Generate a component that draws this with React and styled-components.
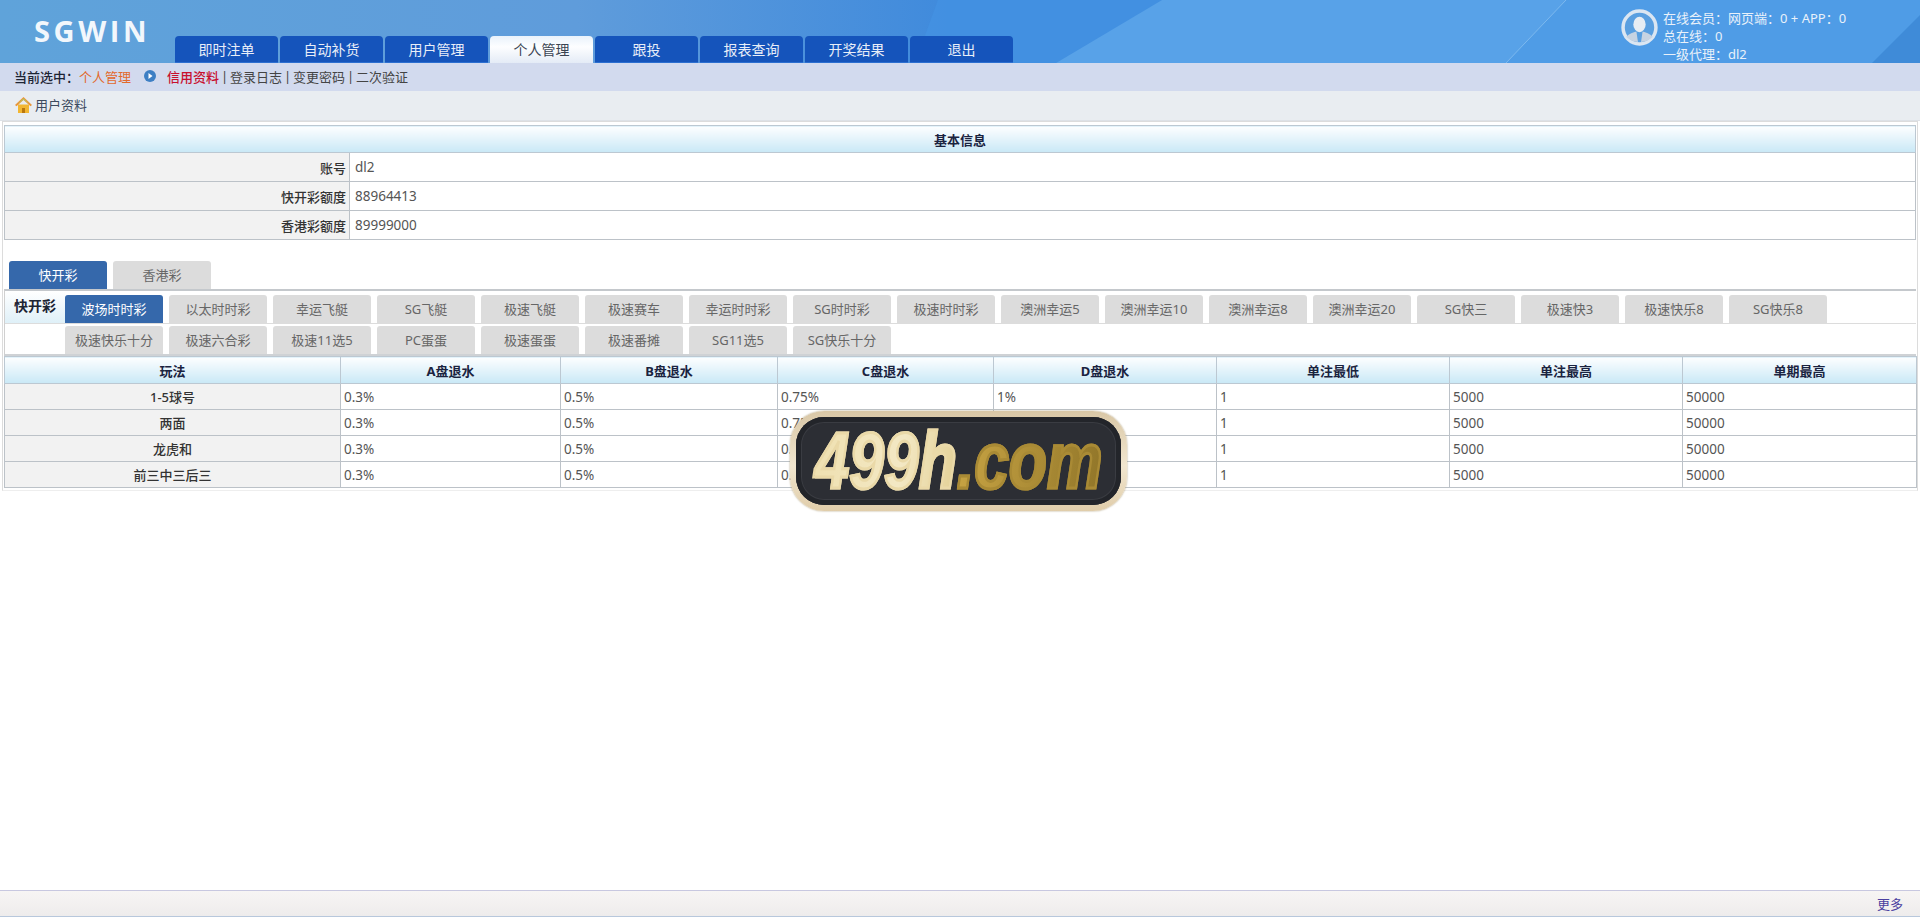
import React from "react";
import styled, { createGlobalStyle } from "styled-components";

const navItems = ["即时注单", "自动补货", "用户管理", "个人管理", "跟投", "报表查询", "开奖结果", "退出"];

const games = [
  "波场时时彩", "以太时时彩", "幸运飞艇", "SG飞艇", "极速飞艇", "极速赛车", "幸运时时彩", "SG时时彩", "极速时时彩",
  "澳洲幸运5", "澳洲幸运10", "澳洲幸运8", "澳洲幸运20", "SG快三", "极速快3", "极速快乐8", "SG快乐8",
];
const games2 = ["极速快乐十分", "极速六合彩", "极速11选5", "PC蛋蛋", "极速蛋蛋", "极速番摊", "SG11选5", "SG快乐十分"];

const columns = [
  { name: "玩法", width: 336 },
  { name: "A盘退水", width: 220 },
  { name: "B盘退水", width: 217 },
  { name: "C盘退水", width: 216 },
  { name: "D盘退水", width: 223 },
  { name: "单注最低", width: 233 },
  { name: "单注最高", width: 233 },
  { name: "单期最高", width: 234 },
];

const rows = ["1-5球号", "两面", "龙虎和", "前三中三后三"];

const links = ["登录日志", "变更密码", "二次验证"];

export default function App() {
  return (
    <Page>
      <GlobalStyle />
      <Header>
        <HeaderArt viewBox="0 0 1920 63" preserveAspectRatio="none">
          <defs>
            <linearGradient id="sky" x1="0" x2="1" y1="0" y2="0">
              <stop offset="0" stopColor="#5fa3da" />
              <stop offset="0.3" stopColor="#5f9cdb" />
              <stop offset="0.5" stopColor="#3f8adc" />
              <stop offset="1" stopColor="#3f8fe0" />
            </linearGradient>
          </defs>
          <rect width="1920" height="63" fill="url(#sky)" />
          <polygon points="938,0 1162,0 1056,63 915,63" fill="#4595e4" opacity="0.6" />
          <polygon points="1162,0 1920,0 1920,63 1056,63" fill="#58a2e8" />
          <polygon points="1566,0 1920,0 1920,63 1506,63" fill="#4f9ce6" />
          <polygon points="1920,15 1920,63 1872,63" fill="#3f8bd8" />
          <line x1="1506" y1="63" x2="1566" y2="0" stroke="#7db9ee" strokeWidth="1" />
        </HeaderArt>
        <Logo>SGWIN</Logo>
        <Nav>
          {navItems.map((item) => (
            <NavTab key={item} $active={item === "个人管理"}>
              {item}
            </NavTab>
          ))}
        </Nav>
        <UserBox>
          <Avatar viewBox="0 0 36 36">
            <circle cx="18" cy="18" r="16" fill="#5a9fe0" stroke="#dbe6f2" strokeWidth="3.4" />
            <ellipse cx="18" cy="15" rx="6" ry="7.5" fill="#e8edf3" />
            <path d="M5 27c3-3 7-4 10-5l1.5 10C12 32 8 30 5 27zM31 27c-3-3-7-4-10-5l-1.5 10c4.500 0 8.500-2 11.500-5z" fill="#c7d3e2" />
          </Avatar>
          <UserText>
            <div>在线会员：网页端：0 + APP：0</div>
            <div>总在线：0</div>
            <div>一级代理：dl2</div>
          </UserText>
        </UserBox>
      </Header>

      <SubNav>
        <strong>当前选中：</strong>
        <Current>个人管理</Current>
        <Bullet viewBox="0 0 12 12">
          <circle cx="6" cy="6" r="6" fill="#3d7fc4" />
          <path d="M4.500 3l4 3-4 3z" fill="#fff" />
        </Bullet>
        <ActiveLink>信用资料</ActiveLink>
        {links.map((link) => (
          <React.Fragment key={link}>
            <Sep>|</Sep>
            <SubLink>{link}</SubLink>
          </React.Fragment>
        ))}
      </SubNav>

      <Crumb>
        <svg width="17" height="16" viewBox="0 0 17 16">
          <path d="M3 7.500h11V16H3z" fill="#f2b632" />
          <path d="M7 11h3v5H7z" fill="#b9770e" />
          <path d="M8.500 0L0 8l1.500 1.300 7-6.300 7 6.300L17 8z" fill="#e9963a" />
          <path d="M8.500 1.500L2.500 7l6-4.300L14.500 7z" fill="#a9cf6a" />
        </svg>
        用户资料
      </Crumb>

      <Content>
        <DataTable>
          <colgroup>
            <col width="345" />
            <col />
          </colgroup>
          <thead>
            <tr>
              <HeadCell colSpan={2}>基本信息</HeadCell>
            </tr>
          </thead>
          <tbody>
            <InfoRow label="账号" value="dl2" />
            <InfoRow label="快开彩额度" value="88964413" />
            <InfoRow label="香港彩额度" value="89999000" />
          </tbody>
        </DataTable>

        <MainTabs>
          <MainTab $active>快开彩</MainTab>
          <MainTab>香港彩</MainTab>
        </MainTabs>

        <GameBox>
          <GameRow $line>
            <GameLabel>快开彩</GameLabel>
            <GameList>
              {games.map((g, i) => (
                <GameTab key={g} $active={i === 0}>{g}</GameTab>
              ))}
            </GameList>
          </GameRow>
          <GameRow>
            <GameLabel $blank />
            <GameList>
              {games2.map((g) => (
                <GameTab key={g}>{g}</GameTab>
              ))}
            </GameList>
          </GameRow>
        </GameBox>

        <DataTable>
          <colgroup>
            {columns.map((c) => (
              <col key={c.name} width={c.width} />
            ))}
          </colgroup>
          <thead>
            <tr>
              {columns.map((c) => (
                <HeadCell key={c.name}>{c.name}</HeadCell>
              ))}
            </tr>
          </thead>
          <tbody>
            {rows.map((r) => (
              <tr key={r}>
                <LabelCell $h={26}>{r}</LabelCell>
                <ValueCell>0.3%</ValueCell>
                <ValueCell>0.5%</ValueCell>
                <ValueCell>0.75%</ValueCell>
                <ValueCell>1%</ValueCell>
                <ValueCell>1</ValueCell>
                <ValueCell>5000</ValueCell>
                <ValueCell>50000</ValueCell>
              </tr>
            ))}
          </tbody>
        </DataTable>
      </Content>

      <Footer>更多</Footer>

      <Badge>
        <BadgeInner>
          <BadgeText>
            <Pale>499h</Pale>
            <Gold>.com</Gold>
          </BadgeText>
        </BadgeInner>
      </Badge>
    </Page>
  );
}

function InfoRow({ label, value }) {
  return (
    <tr>
      <LabelCell $right $h={29}>{label}</LabelCell>
      <ValueCell $wide>{value}</ValueCell>
    </tr>
  );
}

const GlobalStyle = createGlobalStyle`
  html, body {
    margin: 0;
    padding: 0;
    background: #fff;
    overflow: hidden;
  }
  body {
    font-family: "Noto Sans", "Noto Sans CJK SC", sans-serif;
    font-size: 13px;
    color: #333;
  }
`;

const Page = styled.div`
  position: relative;
  display: flex;
  flex-direction: column;
  height: 919px;
`;

const Header = styled.header`
  position: relative;
  display: flex;
  height: 63px;
  flex-shrink: 0;
`;

const HeaderArt = styled.svg`
  position: absolute;
  inset: 0;
  width: 100%;
  height: 100%;
`;

const Logo = styled.div`
  position: relative;
  width: 175px;
  padding: 13px 0 0 34px;
  box-sizing: border-box;
  font-family: "Open Sans", sans-serif;
  font-size: 29px;
  font-weight: 700;
  line-height: 36px;
  letter-spacing: 3.6px;
  color: #f2f7fc;
`;

const Nav = styled.nav`
  position: relative;
  display: flex;
  align-items: flex-end;
  gap: 2px;
`;

const NavTab = styled.div`
  width: 103px;
  height: 27px;
  box-sizing: border-box;
  border-radius: 4px 4px 0 0;
  text-align: center;
  font-size: 14px;
  line-height: 28px;
  background: ${(p) => (p.$active ? "linear-gradient(#e9f2fb, #fdfeff 40%, #e4ebf6)" : "#1554bb")};
  color: ${(p) => (p.$active ? "#3a4452" : "#e8eef8")};
  border-bottom: ${(p) => (p.$active ? "none" : "1px solid #2c6fd0")};
`;

const UserBox = styled.div`
  position: relative;
  display: flex;
  margin-left: auto;
  width: 299px;
`;

const Avatar = styled.svg`
  width: 37px;
  height: 37px;
  margin: 9px 5px 0 0;
`;

const UserText = styled.div`
  padding-top: 9px;
  font-size: 13px;
  line-height: 18px;
  color: #e9f1fa;
`;

const SubNav = styled.div`
  display: flex;
  align-items: center;
  height: 28px;
  flex-shrink: 0;
  box-sizing: border-box;
  padding: 0 0 2px 14px;
  background: #d2daee;

  strong {
    color: #1d2433;
    font-weight: 500;
  }
`;

const Current = styled.span`
  color: #e2692c;
`;

const Bullet = styled.svg`
  width: 12px;
  height: 12px;
  margin: 0 11px 0 13px;
`;

const ActiveLink = styled.span`
  color: #c8102e;
  font-weight: 500;
`;

const SubLink = styled.span`
  color: #444;
`;

const Sep = styled.span`
  width: 11px;
  text-align: center;
  color: #444;
`;

const Crumb = styled.div`
  display: flex;
  align-items: center;
  gap: 3px;
  height: 30px;
  flex-shrink: 0;
  box-sizing: border-box;
  padding: 0 0 2px 15px;
  background: #e9edf1;
  border-bottom: 1px solid #dde1e6;
  color: #3c4a5e;
`;

const Content = styled.main`
  margin: 0 2px;
  padding: 3px 1px 2px;
  border: 1px solid #dcdcdc;
  border-bottom-color: #eee;
`;

const DataTable = styled.table`
  width: 1912px;
  table-layout: fixed;
  border-collapse: collapse;
  border: 1px solid #bcc2c8;
`;

const HeadCell = styled.th`
  height: 27px;
  box-sizing: border-box;
  padding: 0;
  border: 1px solid #bcc8d2;
  background: linear-gradient(#fdfeff, #c9e8f6);
  color: #1a2340;
  font-weight: 700;
  font-size: 13px;
`;

const LabelCell = styled.td`
  height: ${(p) => p.$h}px;
  box-sizing: border-box;
  padding: 0 ${(p) => (p.$right ? "3px" : "0")} 0 0;
  border: 1px solid #bcc2c8;
  background: #f2f2f2;
  color: #333;
  font-weight: 500;
  text-align: ${(p) => (p.$right ? "right" : "center")};
`;

const ValueCell = styled.td`
  padding: 0 0 0 ${(p) => (p.$wide ? "5px" : "3px")};
  border: 1px solid #bcc2c8;
  font-size: 13.5px;
  color: #555;
`;

const MainTabs = styled.div`
  display: flex;
  gap: 6px;
  margin: 21px 0 0 5px;
`;

const MainTab = styled.div`
  width: 98px;
  height: 28px;
  border-radius: 3px 3px 0 0;
  text-align: center;
  line-height: 28px;
  background: ${(p) => (p.$active ? "#3568ab" : "#dcdcdc")};
  color: ${(p) => (p.$active ? "#fff" : "#666")};
`;

const GameBox = styled.div`
  border-top: 2px solid #c4c8cc;
  border-bottom: 2px solid #cfd2d5;
  border-left: 1px solid #d0d0d0;
`;

const GameRow = styled.div`
  display: flex;
  height: ${(p) => (p.$line ? "33px" : "30px")};
  box-sizing: border-box;
  border-bottom: ${(p) => (p.$line ? "1px solid #dcdcdc" : "none")};
`;

const GameLabel = styled.div`
  width: 60px;
  flex-shrink: 0;
  padding-top: 4px;
  text-align: center;
  box-sizing: border-box;
  font-size: 14px;
  font-weight: 700;
  color: #1d2433;
  background: ${(p) => (p.$blank ? "#fff" : "linear-gradient(#fff, #dff0f8)")};
`;

const GameList = styled.div`
  display: flex;
  align-items: flex-end;
  gap: 6px;
`;

const GameTab = styled.div`
  width: 98px;
  height: 28px;
  border-radius: 3px 3px 0 0;
  text-align: center;
  line-height: 28px;
  white-space: nowrap;
  background: ${(p) => (p.$active ? "#3568ab" : "#dcdcdc")};
  color: ${(p) => (p.$active ? "#fff" : "#666")};
`;

const Footer = styled.footer`
  margin-top: auto;
  margin-bottom: 2px;
  height: 27px;
  box-sizing: border-box;
  padding-right: 17px;
  border-top: 1px solid #c8c8e0;
  border-bottom: 1px solid #b8c8dc;
  background: linear-gradient(#f7f5f4, #eeecec);
  color: #4a3fa0;
  text-align: right;
  line-height: 26px;
`;

const Badge = styled.div`
  position: absolute;
  left: 790px;
  top: 411px;
  width: 337px;
  height: 100px;
  box-sizing: border-box;
  padding: 6px;
  border-radius: 34px;
  background: linear-gradient(#d9c7a6, #f1e6cf 55%, #e0cdaa);
  box-shadow: 0 0 2px #a99871;
`;

const BadgeInner = styled.div`
  display: flex;
  align-items: center;
  justify-content: center;
  height: 100%;
  border-radius: 28px;
  background: #2c2e34;
  box-shadow: inset 0 0 0 5px #23252a, inset 0 0 0 6px #3a3c42;
`;

const BadgeText = styled.div`
  font-family: "Liberation Sans", sans-serif;
  font-size: 80px;
  font-style: italic;
  font-weight: 700;
  line-height: 88px;
  white-space: nowrap;
  transform: scaleX(0.78);
`;

const Pale = styled.span`
  background: linear-gradient(100deg, #efe0b0, #f3e8c4 60%, #e2cf94);
  -webkit-background-clip: text;
  background-clip: text;
  color: transparent;
  -webkit-text-stroke: 3px #ead9a8;
`;

const Gold = styled.span`
  background: linear-gradient(100deg, #c9a544, #a98a35 60%, #8f7428);
  -webkit-background-clip: text;
  background-clip: text;
  color: transparent;
  -webkit-text-stroke: 3px #a98a35;
`;
